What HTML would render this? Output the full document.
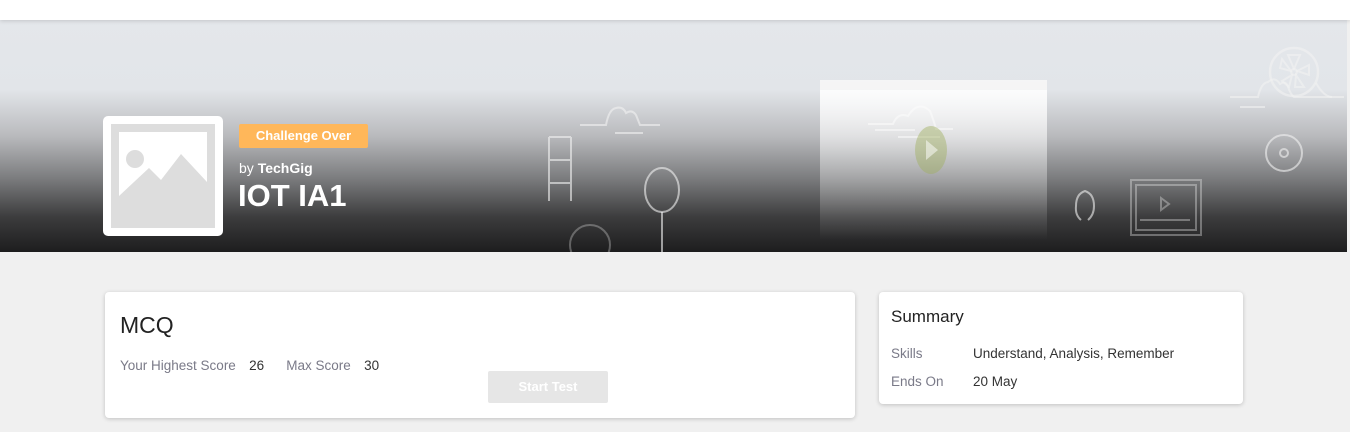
<!DOCTYPE html>
<html><head><meta charset="utf-8"><style>
*{margin:0;padding:0;box-sizing:border-box}
body{width:1350px;height:432px;overflow:hidden;background:#f0f0f0;font-family:"Liberation Sans",sans-serif;position:relative}
.top{position:absolute;left:0;top:0;width:1350px;height:20px;background:#fff;box-shadow:0 1px 4px rgba(0,0,0,.15);z-index:3}
.hero{position:absolute;left:0;top:20px;width:1347px;height:232px;background:linear-gradient(to bottom,#e4e7eb 0%,#e2e5e9 30%,#b9babd 50%,#7c7d7f 68%,#3c3c3d 85%,#1d1d1e 100%);overflow:hidden}
.thumb{position:absolute;left:103px;top:116px;width:120px;height:120px;background:#fff;border-radius:5px;padding:8px}
.thumb div{width:100%;height:100%;background:#ddd}
.badge{position:absolute;left:239px;top:124px;width:129px;height:24px;background:#ffb75a;border-radius:2px;color:#fff;font-weight:bold;font-size:13px;text-align:center;line-height:24px}
.by{position:absolute;left:239px;top:160px;color:#fff;font-size:14px}
.title{position:absolute;left:238px;top:178px;color:#fff;font-size:31px;font-weight:bold}
.card{position:absolute;background:#fff;border-radius:4px;box-shadow:0 1px 4px rgba(0,0,0,.2)}
.lbl{color:#7a7a88;font-size:13.5px}
.val{color:#333;font-size:13.5px}
</style></head><body>
<div class="top"></div>
<div class="hero">
<svg width="1347" height="232" style="position:absolute;left:0;top:0" fill="none" stroke="#f2f2f2" stroke-width="2" stroke-opacity=".6">
<defs><linearGradient id="sg" x1="0" y1="0" x2="0" y2="1"><stop offset="0" stop-color="#fff" stop-opacity=".95"/><stop offset=".5" stop-color="#fff" stop-opacity=".4"/><stop offset="1" stop-color="#fff" stop-opacity="0"/></linearGradient></defs>
<path d="M580 105h26q3-16 10-17 7-2 10 5 6-4 10 2 2 5 4 10h20M615 113h28"/>
<path d="M868 104h25q5-12 15-8 10-16 22-5 4 10 6 18h17M875 110h40M898 117h42"/>
<path d="M1230 77h28q3-14 10-15 7-6 12 2 6-4 8 3 3 8 6 10h50M1240 87h25"/>
<rect x="820" y="60" width="227" height="160" fill="url(#sg)" stroke="none"/>
<rect x="820" y="60" width="227" height="10" fill="#f0f0f0" fill-opacity=".6" stroke="none"/>
<ellipse cx="931" cy="130" rx="16" ry="24" fill="#9fb060" fill-opacity=".45" stroke="none"/>
<path d="M926 120l12 10-12 10z" fill="#fff" fill-opacity=".5" stroke="none"/>
<circle cx="1294" cy="52" r="24" stroke-width="2.5"/>
<circle cx="1294" cy="52" r="3"/>
<path d="M1294 49l-6-14h12zM1297 51l12-6v10zM1296 55l8 12-9 0zM1292 55l-3 12-7-6zM1291 51l-11-3 2-9z"/>
<path d="M1316 63q8 14 16 14"/>
<circle cx="1284" cy="133" r="18"/><circle cx="1284" cy="133" r="4"/>
<path d="M549 117v64M571 117v64M549 117h22M549 140h22M549 163h22"/>
<path d="M1131 160h70v55h-70zM1136 165h60v45h-60zM1140 200h50M1161 178l8 6-8 6z" stroke-opacity=".35"/>
<ellipse cx="662" cy="170" rx="17" ry="22"/><path d="M662 192v40"/>
<path d="M1081 200q-6-5-5-14 0-12 9-15 9 3 9 15 0 9-6 14"/>
<circle cx="590" cy="225" r="20" stroke-opacity=".3"/>
</svg>
</div>
<div class="thumb"><div><svg width="104" height="104" viewBox="0 0 104 104"><rect x="8" y="8" width="88" height="78" fill="#fff"/><circle cx="24" cy="35" r="9" fill="#ddd"/><path d="M8 72 L38 44 L50 56 L70 30 L96 58 V104 H8Z" fill="#ddd"/></svg></div></div>
<div class="badge">Challenge Over</div>
<div class="by">by <b>TechGig</b></div>
<div class="title">IOT IA1</div>

<div class="card" style="left:105px;top:292px;width:750px;height:126px">
<div style="position:absolute;left:15px;top:20px;font-size:23px;color:#222">MCQ</div>
<div style="position:absolute;left:15px;top:65px"><span class="lbl">Your Highest Score</span>&nbsp;&nbsp;&nbsp;<span class="val">26</span><span class="lbl" style="margin-left:22px">Max Score</span>&nbsp;&nbsp;&nbsp;<span class="val">30</span></div>
<div style="position:absolute;left:383px;top:79px;width:120px;height:32px;background:#e6e6e6;border-radius:2px;color:#fff;font-weight:bold;font-size:13px;text-align:center;line-height:32px">Start Test</div>
</div>

<div class="card" style="left:879px;top:292px;width:364px;height:112px">
<div style="position:absolute;left:12px;top:15px;font-size:17px;color:#222">Summary</div>
<div style="position:absolute;left:12px;top:54px" class="lbl">Skills</div>
<div style="position:absolute;left:94px;top:54px" class="val">Understand, Analysis, Remember</div>
<div style="position:absolute;left:12px;top:82px" class="lbl">Ends On</div>
<div style="position:absolute;left:94px;top:82px" class="val">20 May</div>
</div>
</body></html>
